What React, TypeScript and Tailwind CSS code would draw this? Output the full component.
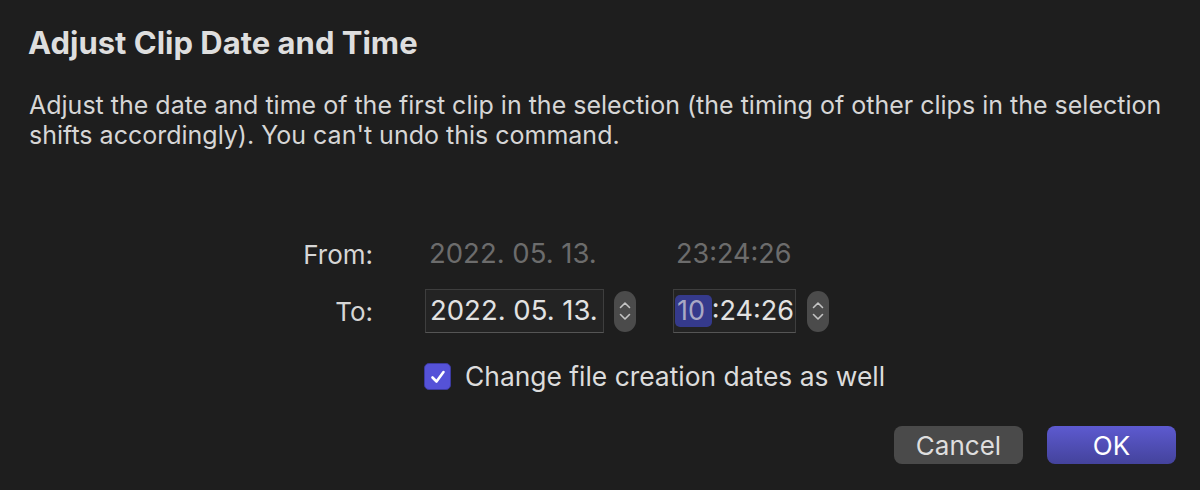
import React from "react";

const Stepper: React.FC<{ hidden?: boolean }> = ({ hidden }) => (
  <div
    className={
      "w-[22px] h-[41px] rounded-[11px] flex flex-col items-center justify-center gap-[4px] " +
      (hidden ? "invisible" : "bg-[#4b4b4b]")
    }
  >
    <svg width="12" height="8" viewBox="0 0 12 8" fill="none">
      <path d="M1.5 6.5 L6 2 L10.5 6.5" stroke="#c4c4c4" strokeWidth="1.6" strokeLinecap="round" strokeLinejoin="round" />
    </svg>
    <svg width="12" height="8" viewBox="0 0 12 8" fill="none">
      <path d="M1.5 1.5 L6 6 L10.5 1.5" stroke="#c4c4c4" strokeWidth="1.6" strokeLinecap="round" strokeLinejoin="round" />
    </svg>
  </div>
);

export default function App() {
  return (
    <div
      className="w-[1200px] h-[490px] bg-[#1e1e1e] text-[#dcdcdc] overflow-hidden flex flex-col whitespace-nowrap"
      style={{ fontFamily: "Inter, 'Noto Sans', sans-serif" }}
    >
      {/* Header */}
      <h1 className="ml-[28px] mt-[25px] h-[36px] text-[31px] leading-[36px] font-bold text-[#dedede]">
        Adjust Clip Date and Time
      </h1>
      <p className="ml-[29px] mt-[29px] w-[1160px] text-[25px] leading-[30px] text-[#d6d6d6] whitespace-normal">
        Adjust the date and time of the first clip in the selection (the timing of other clips in the selection
        shifts accordingly). You can't undo this command.
      </p>

      {/* From row */}
      <div className="flex items-center mt-[82px] h-[44px]">
        <div className="w-[373px] text-right text-[26px] text-[#d6d6d6]">From:</div>
        <div className="ml-[52px] w-[179px] px-[4px] text-[27.5px] text-[#6c6c6c]">2022. 05. 13.</div>
        <div className="ml-[10px]">
          <Stepper hidden />
        </div>
        <div className="ml-[37px] w-[123px] px-[3px] text-[27px] text-[#6c6c6c]">23:24:26</div>
      </div>

      {/* To row */}
      <div className="flex items-center mt-[13px] h-[44px]">
        <div className="w-[373px] text-right text-[26px] text-[#d6d6d6]">To:</div>
        <div className="ml-[52px] w-[179px] h-[44px] px-[4px] flex items-center bg-[#232323] border border-[#3e3e3e] border-b-[#555] text-[27.5px] text-[#e2e2e2] overflow-hidden">
          2022. 05. 13.
        </div>
        <div className="ml-[10px]">
          <Stepper />
        </div>
        <div className="ml-[37px] w-[123px] h-[44px] px-[1px] flex items-center bg-[#232323] border border-[#3e3e3e] border-b-[#555] text-[27px] text-[#e2e2e2] overflow-hidden">
          <span className="w-[38px] h-[32px] pl-[2px] flex items-center rounded-[5px] bg-[#353a8c] text-[#a9a9c4]">10</span>
          <span>:24:26</span>
        </div>
        <div className="ml-[11px]">
          <Stepper />
        </div>
      </div>

      {/* Checkbox row */}
      <div className="flex items-center mt-[30px] ml-[424px] h-[27px]">
        <div className="w-[27px] h-[27px] rounded-[5px] bg-[#5552d8] border border-[#3c3aa0] flex items-center justify-center">
          <svg width="20" height="20" viewBox="0 0 20 20" fill="none">
            <path d="M4.5 10.5 L8.5 14.5 L15.5 5" stroke="#ffffff" strokeWidth="2.6" strokeLinecap="round" strokeLinejoin="round" />
          </svg>
        </div>
        <span className="ml-[14px] text-[26.4px] text-[#dcdcdc]">Change file creation dates as well</span>
      </div>

      {/* Buttons */}
      <div className="flex justify-end gap-[24px] mr-[24px] mt-[36px]">
        <button className="w-[129px] h-[38px] rounded-[8px] bg-[#4a4a4a] text-[26px] text-[#dedede] flex items-center justify-center">
          Cancel
        </button>
        <button className="w-[129px] h-[38px] rounded-[8px] bg-gradient-to-b from-[#5d5ad0] to-[#44439c] text-[26px] text-white flex items-center justify-center">
          OK
        </button>
      </div>
    </div>
  );
}
